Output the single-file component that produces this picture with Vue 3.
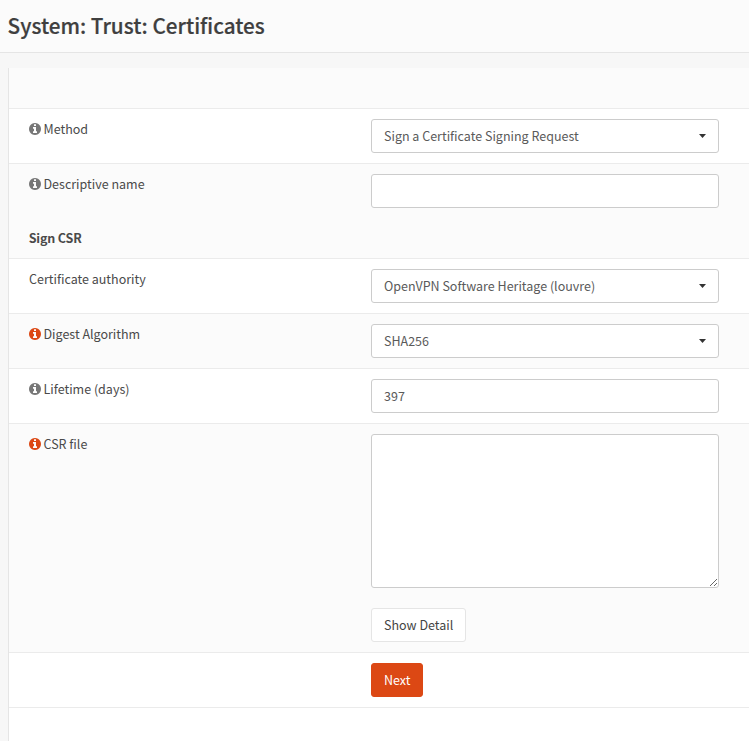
<script setup>
import { ref } from 'vue'

const descriptiveName = ref('')
const lifetime = ref('397')
const csr = ref('')

const rows = [
  { label: 'Method', icon: 'muted', type: 'select', value: 'Sign a Certificate Signing Request' },
  { label: 'Descriptive name', icon: 'muted', type: 'text', model: descriptiveName, shaded: true },
  { section: 'Sign CSR' },
  { label: 'Certificate authority', type: 'select', value: 'OpenVPN Software Heritage (louvre)' },
  { label: 'Digest Algorithm', icon: 'accent', type: 'select', value: 'SHA256', shaded: true },
  { label: 'Lifetime (days)', icon: 'muted', type: 'text', model: lifetime },
  { label: 'CSR file', icon: 'accent', type: 'area', shaded: true }
]
</script>

<template>
  <div class="page">
    <header class="page-head">
      <h1>System: Trust: Certificates</h1>
    </header>
    <main class="content-box">
      <div class="table-head"></div>
      <template v-for="row in rows" :key="row.label || row.section">
        <div v-if="row.section" class="section">{{ row.section }}</div>
        <div v-else class="row" :class="{ shaded: row.shaded }">
          <div class="label">
            <svg v-if="row.icon" class="info" :class="row.icon" viewBox="0 0 1536 1536">
              <path
                d="M1024 1248v-160q0-14-9-23t-23-9h-96V544q0-14-9-23t-23-9H544q-14 0-23 9t-9 23v160q0 14 9 23t23 9h96v320h-96q-14 0-23 9t-9 23v160q0 14 9 23t23 9h448q14 0 23-9t9-23zM896 352V192q0-14-9-23t-23-9H672q-14 0-23 9t-9 23v160q0 14 9 23t23 9h192q14 0 23-9t9-23zM1536 768q0 209-103 385.500T1153.500 1433 768 1536t-385.500-103T103 1153.500 0 768t103-385.500T382.500 103 768 0t385.500 103T1433 382.500 1536 768z"
              />
            </svg>
            <span>{{ row.label }}</span>
          </div>
          <div class="field">
            <button v-if="row.type === 'select'" type="button" class="control select">
              <span>{{ row.value }}</span>
              <i class="caret"></i>
            </button>
            <input v-else-if="row.type === 'text'" v-model="row.model.value" class="control" type="text" />
            <template v-else>
              <textarea v-model="csr" class="control area"></textarea>
              <button type="button" class="btn">Show Detail</button>
            </template>
          </div>
        </div>
      </template>
      <div class="row">
        <div class="label"></div>
        <div class="field"><button type="button" class="btn primary">Next</button></div>
      </div>
      <div class="table-end"></div>
    </main>
  </div>
</template>

<style>
body {
  margin: 0;
  background: #f7f7f7;
  overflow: hidden;
}
</style>

<style scoped>
* {
  box-sizing: border-box;
}
.page {
  height: 741px;
  overflow: hidden;
  display: flex;
  flex-direction: column;
  background: #f7f7f7;
  color: #4a4a4a;
  font-family: "Noto Sans CJK JP", "Noto Sans", sans-serif;
  font-size: 12.5px;
  line-height: 20px;
}
.page-head {
  flex: none;
  height: 53px;
  padding: 10px 8px 0;
  background: #fbfbfb;
  border-bottom: 1px solid #e5e5e5;
}
h1 {
  margin: 0 0 0 -0.4px;
  font-size: 20.7px;
  font-weight: 500;
  line-height: 30px;
  color: #3f3f3f;
  -webkit-text-stroke: 0.2px #3f3f3f;
}
.content-box {
  flex: 1;
  display: flex;
  flex-direction: column;
  margin: 15px 0 0 8px;
  border-left: 1px solid #e5e5e5;
  background: #fff;
}
.table-head {
  flex: none;
  height: 40px;
  background: #fbfbfb;
}
.row {
  flex: none;
  display: grid;
  grid-template-columns: 342px 348px;
  padding: 10px 0 10px 20px;
  border-top: 1px solid #ebebeb;
}
.shaded,
.section {
  background: #fbfbfb;
}
.section {
  flex: none;
  height: 40px;
  padding: 10px 19.7px;
  font-weight: 700;
  letter-spacing: -0.15px;
}
.label {
  display: flex;
  align-items: flex-start;
  gap: 2.9px;
}
.info {
  width: 12px;
  height: 12px;
  margin: 4px 0 0 -0.4px;
}
.muted {
  fill: #777;
}
.accent {
  fill: #dc4814;
}
.field {
  display: flex;
  flex-direction: column;
  align-items: flex-start;
  gap: 20px;
}
.control,
.btn {
  height: 34px;
  margin: 0;
  padding: 6px 12px;
  border: 1px solid #ccc;
  border-radius: 3px;
  background: #fff;
  color: #5a5a5a;
  font: inherit;
  outline: none;
}
.control {
  width: 348px;
}
input.control {
  padding: 5px 12px 7px;
}
.select {
  display: flex;
  align-items: center;
  justify-content: space-between;
  text-align: left;
}
.caret {
  width: 7px;
  height: 4px;
  background: #333;
  clip-path: polygon(0 0, 100% 0, 50% 100%);
}
.area {
  display: block;
  height: 154px;
  resize: vertical;
}
.btn {
  border-color: #e5e5e5;
  color: #444;
}
.primary {
  border-color: #dc4814;
  background: #dc4814;
  color: #fff;
}
.table-end {
  flex: 1;
  border-top: 1px solid #ebebeb;
}
</style>
